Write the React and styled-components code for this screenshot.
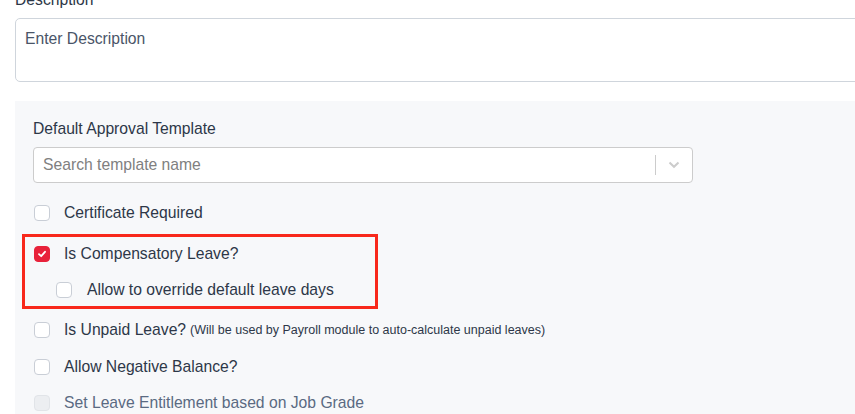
import React from 'react'
import styled, { createGlobalStyle } from 'styled-components'

const Global = createGlobalStyle`
  body {
    margin: 0;
    background: #fff;
    overflow: hidden;
    font-family: "Liberation Sans", Arial, sans-serif;
    color: #2d3748;
  }
`;

const Page = styled.div`
  width: 900px;
  padding-left: 15px;
  margin-top: -10px;
`;

const Label = styled.div`
  font-size: 15.7px;
  line-height: 20px;
  color: #2d3748;
  margin-bottom: 8px;
`;

const TextArea = styled.div`
  height: 64px;
  box-sizing: border-box;
  border: 1px solid #cfd5dc;
  border-radius: 5px;
  padding: 10px 9px;
  font-size: 15.7px;
  line-height: 20px;
  color: #4a5568;
`;

const Panel = styled.div`
  margin-top: 19px;
  background: #f7f8fa;
  padding: 18px 18px 40px;
  height: 400px;
`;

const Select = styled.div`
  width: 660px;
  height: 36px;
  box-sizing: border-box;
  background: #fff;
  border: 1px solid #cccccc;
  border-radius: 4px;
  display: flex;
  align-items: center;
  padding-left: 9px;
  font-size: 15.7px;
  color: #808080;
`;

const Placeholder = styled.span`
  flex: 1;
`;

const Separator = styled.span`
  width: 1px;
  height: 20px;
  background: #cccccc;
`;

const Indicator = styled.span`
  width: 36px;
  display: flex;
  justify-content: center;
  align-items: center;
`;

const Row = styled.div`
  display: flex;
  align-items: center;
  height: 20px;
  margin-top: ${p => p.$mt || 0}px;
  padding-left: ${p => p.$indent || 0}px;
  font-size: 15.7px;
  white-space: nowrap;
  color: ${p => p.$disabled ? '#5a6a82' : '#2d3748'};
`;

const Box = styled.span`
  flex: none;
  width: 16px;
  height: 16px;
  box-sizing: border-box;
  margin-left: 1px;
  margin-right: ${p => p.$gap || 14}px;
  border-radius: 4px;
  border: 1px solid ${p => p.$checked ? '#e8223a' : p.$disabled ? '#e1e4e8' : '#c9ced6'};
  background: ${p => p.$checked ? '#e8223a' : p.$disabled ? '#eceef1' : '#fff'};
  display: flex;
  align-items: center;
  justify-content: center;
`;

const Note = styled.span`
  font-size: 12.5px;
  margin-left: 4px;
`;

const Highlight = styled.div`
  width: 356px;
  box-sizing: border-box;
  margin-top: 11px;
  margin-left: -11px;
  border: 3px solid #f8281b;
  padding: 7px 0 6px 8px;
`;

const Checkbox = ({ checked, disabled, gap }) => (
  <Box $checked={checked} $disabled={disabled} $gap={gap}>
    {checked && (
      <svg width="10" height="10" viewBox="0 0 10 10">
        <path d="M2 5.2 L4.2 7.2 L8 2.8" stroke="#fff" strokeWidth="1.8" fill="none" strokeLinecap="round" strokeLinejoin="round" />
      </svg>
    )}
  </Box>
);

export default function App() {
  return (
    <>
      <Global />
      <Page>
        <Label>Description</Label>
        <TextArea>Enter Description</TextArea>
        <Panel>
          <Label>Default Approval Template</Label>
          <Select>
            <Placeholder>Search template name</Placeholder>
            <Separator />
            <Indicator>
              <svg width="12" height="8" viewBox="0 0 12 8">
                <path d="M1.5 1.5 L6 5.8 L10.5 1.5" stroke="#cccccc" strokeWidth="2" fill="none" />
              </svg>
            </Indicator>
          </Select>
          <Row $mt={20}><Checkbox />Certificate Required</Row>
          <Highlight>
            <Row><Checkbox checked />Is Compensatory Leave?</Row>
            <Row $mt={16} $indent={22}><Checkbox gap={15} />Allow to override default leave days</Row>
          </Highlight>
          <Row $mt={11}>
            <Checkbox />Is Unpaid Leave?
            <Note>(Will be used by Payroll module to auto-calculate unpaid leaves)</Note>
          </Row>
          <Row $mt={17}><Checkbox />Allow Negative Balance?</Row>
          <Row $mt={16} $disabled><Checkbox disabled />Set Leave Entitlement based on Job Grade</Row>
        </Panel>
      </Page>
    </>
  )
}
